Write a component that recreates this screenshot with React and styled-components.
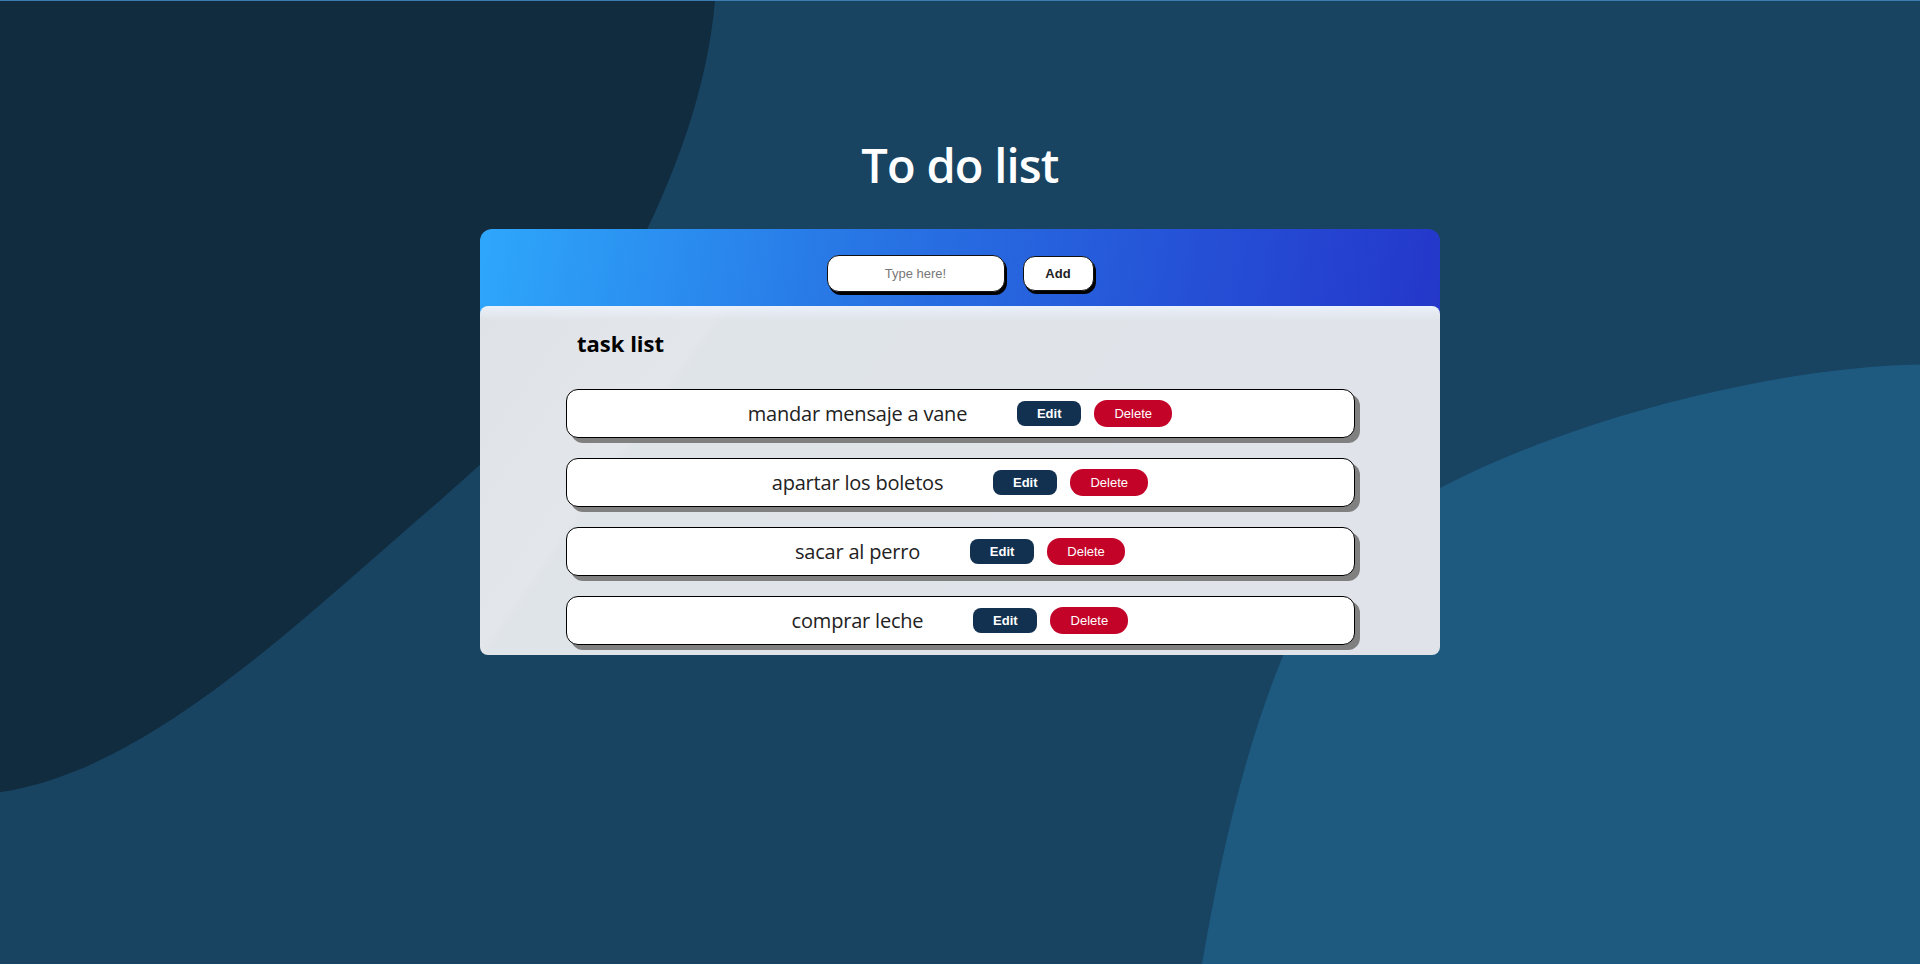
import React from 'react';
import styled, { createGlobalStyle } from 'styled-components';

const GlobalStyle = createGlobalStyle`
  * { box-sizing: border-box; }
  body {
    margin: 0;
    background: #184462;
    font-family: "Open Sans", "Liberation Sans", sans-serif;
  }
`;

const tasks = [
  'mandar mensaje a vane',
  'apartar los boletos',
  'sacar al perro',
  'comprar leche',
];

const Backdrop = () => (
  <BackSvg viewBox="0 0 1920 964" preserveAspectRatio="none">
    <path
      fill="#112b3f"
      d="M0 0 H715 C705 110 660 210 610 300 C560 390 520 430 440 500 C300 620 150 770 0 792 Z"
    />
    <path
      fill="#1e5a80"
      d="M1920 364 C1790 366 1590 410 1441 487 C1360 530 1310 590 1285 651 C1245 745 1220 860 1202 964 H1920 Z"
    />
  </BackSvg>
);

const App = () => {
  return (
    <Page>
      <GlobalStyle />
      <Backdrop />
      <Content>
        <Title>To do list</Title>
        <Card>
          <Header>
            <Input placeholder="Type here!" />
            <AddButton>Add</AddButton>
          </Header>
          <Body>
            <Heading>task list</Heading>
            <List>
              {tasks.map((t) => (
                <Row key={t}>
                  <TaskText>{t}</TaskText>
                  <Action kind="edit">Edit</Action>
                  <Action kind="delete">Delete</Action>
                </Row>
              ))}
            </List>
          </Body>
        </Card>
      </Content>
    </Page>
  );
};

const Page = styled.div`
  position: relative;
  min-height: 100vh;
  overflow: hidden;
  border-top: 1px solid #3b7db3;
`;

const BackSvg = styled.svg`
  position: absolute;
  inset: 0;
  width: 100%;
  height: 100%;
  z-index: 0;
`;

const Content = styled.main`
  position: relative;
  z-index: 1;
  padding-top: 130px;
  display: flex;
  flex-direction: column;
  align-items: center;
`;

const Title = styled.h1`
  margin: 0 0 30px;
  color: #fff;
  font-size: 47px;
  font-weight: 600;
  line-height: 68px;
  letter-spacing: -0.8px;
`;

const Card = styled.section`
  width: 960px;
  border-radius: 12px;
  background: linear-gradient(100deg, #2ea7fb 0%, #2878e6 35%, #2550d6 70%, #2431c7 100%);
`;

const Header = styled.div`
  display: flex;
  justify-content: center;
  align-items: center;
  gap: 18px;
  padding: 26px 0 14px;
`;

const Input = styled.input`
  width: 178px;
  height: 37px;
  border: 1px solid #111;
  border-radius: 12px;
  background: #fff;
  box-shadow: 2px 3px 0 #000;
  text-align: center;
  font-family: "Liberation Sans", Arial, sans-serif;
  font-size: 13px;
  outline: none;
  &::placeholder { color: #777; }
`;

const AddButton = styled.button`
  width: 71px;
  height: 35px;
  border: 1px solid #111;
  border-radius: 12px;
  background: #fff;
  box-shadow: 2px 3px 0 #000;
  font-family: "Liberation Sans", Arial, sans-serif;
  font-size: 13px;
  font-weight: 700;
  color: #222;
`;

const Body = styled.div`
  border-radius: 8px;
  background:
    linear-gradient(180deg, rgba(236, 242, 252, 0.9) 0px, rgba(224, 229, 235, 0) 14px),
    linear-gradient(125deg, #dfe3e8 0%, #e3e6ea 20%, #dfe4e9 21%, #e0e4ea 100%);
  padding: 19px 0 10px;
`;

const Heading = styled.h2`
  margin: 0 0 28px 97px;
  font-size: 22px;
  font-weight: 700;
  line-height: 36px;
  color: #000;
`;

const List = styled.ul`
  list-style: none;
  margin: 0 auto;
  padding: 0;
  width: 789px;
  display: flex;
  flex-direction: column;
  gap: 20px;
`;

const Row = styled.li`
  height: 49px;
  display: flex;
  justify-content: center;
  align-items: center;
  background: #fff;
  border: 1px solid #000;
  border-radius: 12px;
  box-shadow: 5px 5px 0 #808080;
`;

const TaskText = styled.span`
  margin-right: 50px;
  font-size: 20px;
  color: #222;
  letter-spacing: -0.2px;
`;

const Action = styled.button`
  border: none;
  color: #fff;
  font-family: "Liberation Sans", Arial, sans-serif;
  font-size: 13px;
  cursor: pointer;
  background: ${(p) => (p.kind === 'edit' ? '#12304f' : '#c40329')};
  border-radius: ${(p) => (p.kind === 'edit' ? '8px' : '13px')};
  font-weight: ${(p) => (p.kind === 'edit' ? 700 : 400)};
  width: ${(p) => (p.kind === 'edit' ? '64px' : '78px')};
  height: ${(p) => (p.kind === 'edit' ? '25px' : '27px')};
  margin-left: ${(p) => (p.kind === 'delete' ? '13px' : '0')};
  padding: 0;
`;

export default App;
